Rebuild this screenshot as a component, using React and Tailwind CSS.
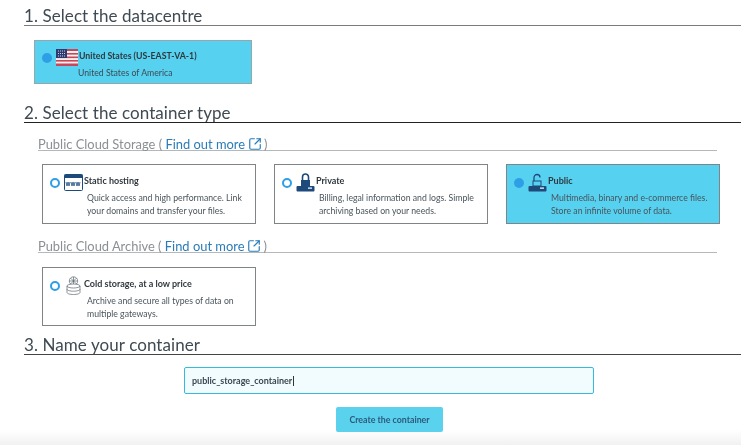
import { SquareArrowOutUpRight } from 'lucide-react';

const FONT = 'font-["Lato","Noto_Sans",sans-serif]';

const Radio = ({ checked }) => (
  <span className={`w-[10px] h-[10px] shrink-0 rounded-full border-2 border-[#2e9fe6] ${checked ? 'bg-[#2e9fe6]' : 'bg-white'}`} />
);

const FlagIcon = () => (
  <svg width="22" height="17" viewBox="0 0 22 17" className="shrink-0">
    <rect width="22" height="17" rx="1" fill="#f3f0f0" />
    <rect y="0" width="22" height="2" fill="#c8455a" />
    <rect y="4" width="22" height="1.6" fill="#c8455a" />
    <rect y="7.5" width="22" height="1.6" fill="#c8455a" />
    <rect y="11" width="22" height="1.6" fill="#c8455a" />
    <rect y="14.5" width="22" height="2.5" fill="#c8455a" />
    <rect width="11" height="9" fill="#2f3b6e" />
    <path d="M2 2h7M2 4.5h7M2 7h7" stroke="#c9cfe6" strokeWidth="1" strokeDasharray="1 1" />
  </svg>
);

const WwwIcon = () => (
  <svg width="19" height="17" viewBox="0 0 19 17">
    <rect x="0.5" y="0.5" width="18" height="16" rx="1" fill="#fff" stroke="#1d4a7a" />
    <rect x="0.5" y="0.5" width="18" height="3.5" fill="#1d4a7a" />
    <path d="M2 8l1 4 1-4 1 4 1-4M7 8l1 4 1-4 1 4 1-4M12 8l1 4 1-4 1 4 1-4" fill="none" stroke="#1d4a7a" strokeWidth="0.8" />
  </svg>
);

const LockIcon = ({ open }) => (
  <svg width="19" height="19" viewBox="0 0 19 19">
    {open ? (
      <path d="M6 8V4.5a3 3 0 0 1 6 0" fill="none" stroke="#1d4a7a" strokeWidth="1.3" />
    ) : (
      <path d="M6.5 8V4a3 3 0 0 1 6 0v4" fill="none" stroke="#1d4a7a" strokeWidth="1.6" />
    )}
    {open ? (
      <rect x="5" y="8" width="8" height="5" fill="none" stroke="#1d4a7a" />
    ) : (
      <rect x="5" y="7" width="9" height="7" fill="#1d4a7a" />
    )}
    <rect x="0.5" y="13" width="18" height="5.5" rx="1" fill="#1d4a7a" />
    <rect x="12" y="14.5" width="4" height="1.2" fill="#fff" />
  </svg>
);

const ColdIcon = () => (
  <svg width="15" height="19" viewBox="0 0 15 19" fill="none" stroke="#5b6770" strokeWidth="0.7">
    <circle cx="7.5" cy="5" r="4.2" />
    <path d="M7.5 1v8M3.5 5h8M4.7 2.2l5.6 5.6M10.3 2.2l-5.6 5.6" />
    <ellipse cx="7.5" cy="10" rx="6.5" ry="2" fill="#fff" />
    <path d="M1 10v6.5c0 1.1 2.9 2 6.5 2s6.5-.9 6.5-2V10M1 13.2c0 1.1 2.9 2 6.5 2s6.5-.9 6.5-2" />
  </svg>
);

const Heading = ({ children, className = '' }) => (
  <h2 className={`ml-6 h-[23px] border-b text-[17px] leading-[25px] tracking-[0.08px] text-[#3f4a52] ${className}`}>{children}</h2>
);

const SubHeading = ({ label, className = '' }) => (
  <div className={`ml-[38px] mr-6 flex items-center h-[19px] pt-[5px] border-b border-[#b5b8ba] text-[12.9px] leading-[14px] text-[#8a9094] ${className}`}>
    <span>{label} (&nbsp;</span>
    <span className="text-[#2a7cb8]">Find out more</span>
    <SquareArrowOutUpRight className="ml-[3px] w-[14px] h-[14px] text-[#2a7cb8]" strokeWidth={2} />
    <span className="ml-[2px]">)</span>
  </div>
);

const TypeCard = ({ icon, title, lines, checked, className = '' }) => (
  <div className={`w-[214px] h-[60px] border border-[#7f8487] pl-[7px] pt-[8px] ${checked ? 'bg-[#56d1f0]' : 'bg-white'} ${className}`}>
    <div className="flex items-center h-[19px]">
      <Radio checked={checked} />
      <span className="ml-1 w-[19px] flex justify-center">{icon}</span>
      <span className="ml-[1px] -mt-1 text-[9px] font-bold text-[#30383e]">{title}</span>
    </div>
    <div className="ml-[37px] -mt-[1px] text-[8.7px] leading-[13px] text-[#4a545b] whitespace-nowrap">
      {lines.map((line) => <div key={line}>{line}</div>)}
    </div>
  </div>
);

export default function App() {
  return (
    <div className={`relative w-[741px] h-[445px] overflow-hidden bg-white pt-[3px] ${FONT}`}>
      <Heading className="border-[#7b7b7b]">1. Select the datacentre</Heading>

      {/* datacentre card */}
      <div className="ml-[34px] mt-[14px] w-[218px] h-[44px] border border-[#9aa5a9] bg-[#56d1f0] pl-[7px] pt-[8px]">
        <div className="flex items-center h-[17px]">
          <Radio checked />
          <span className="ml-1"><FlagIcon /></span>
          <span className="ml-[1px] -mt-1 text-[8.75px] font-bold text-[#30383e]">United States (US-EAST-VA-1)</span>
        </div>
        <div className="ml-[36px] text-[8.7px] leading-[13px] text-[#3f4a52]">United States of America</div>
      </div>

      <Heading className="mt-[16px] border-[#222]">2. Select the container type</Heading>

      <SubHeading className="mt-[9px]" label="Public Cloud Storage" />
      <div className="ml-[42px] mt-[13px] flex gap-[18px]">
        <TypeCard icon={<WwwIcon />} title="Static hosting" lines={['Quick access and high performance. Link', 'your domains and transfer your files.']} />
        <TypeCard icon={<LockIcon />} title="Private" lines={['Billing, legal information and logs. Simple', 'archiving based on your needs.']} />
        <TypeCard checked icon={<LockIcon open />} title="Public" lines={['Multimedia, binary and e-commerce files.', 'Store an infinite volume of data.']} />
      </div>

      <SubHeading className="mt-[10px]" label="Public Cloud Archive" />
      <TypeCard className="ml-[42px] mt-[14px] !h-[59px]" icon={<ColdIcon />} title="Cold storage, at a low price" lines={['Archive and secure all types of data on', 'multiple gateways.']} />

      <Heading className="mt-[6px] border-[#444]">3. Name your container</Heading>

      <div className="ml-[184px] mt-[12px] w-[410px] h-[27px] flex items-center rounded-[2px] border border-[#35bcdc] bg-[#f2fbfe] pl-[7px] text-[9px] font-bold text-[#3a4650]">
        public_storage_container
        <span className="ml-[1px] w-px h-[10px] bg-[#333]" />
      </div>

      <button className="block ml-[336px] mt-[13px] w-[107px] h-[25px] pt-[1px] rounded-[2px] bg-[#5ad2ee] text-[8.8px] font-bold text-[#2c5a7c]">Create the container</button>

      {/* soft fade at the bottom edge */}
      <div className="absolute inset-x-0 bottom-0 h-[15px] bg-gradient-to-b from-white to-[#f1f1f1] pointer-events-none mix-blend-multiply" />
    </div>
  );
}
